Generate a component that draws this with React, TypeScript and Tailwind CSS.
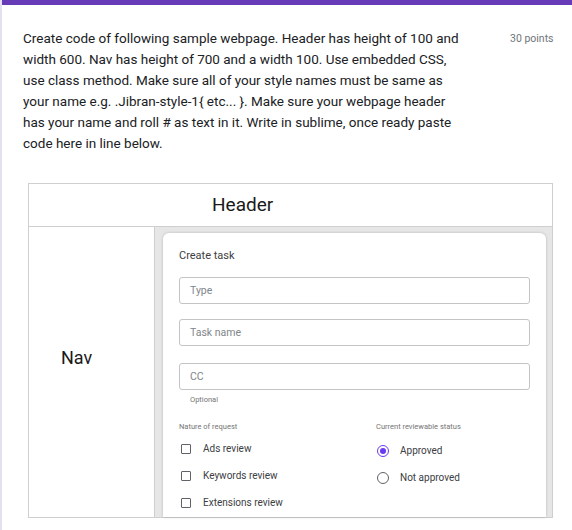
import React from 'react'

const lines = [
  'Create code of following sample webpage. Header has height of 100 and',
  'width 600. Nav has height of 700 and a width 100. Use embedded CSS,',
  'use class method. Make sure all of your style names must be same as',
  'your name e.g. .Jibran-style-1{ etc... }. Make sure your webpage header',
  'has your name and roll # as text in it. Write in sublime, once ready paste',
  'code here in line below.',
]

const Input = ({ label }: { label: string }) => (
  <div className="h-[27px] w-full rounded-[3px] border border-[#c4c4c4] flex items-center pl-[10px] text-[10.5px] text-[#80868b]">
    {label}
  </div>
)

const Check = ({ label }: { label: string }) => (
  <div className="flex items-center h-[27px]">
    <span className="ml-[2px] h-[10px] w-[10px] border-[1.5px] border-[#5f6368] rounded-[1px]" />
    <span className="ml-[12px] text-[10px] text-[#3c4043]">{label}</span>
  </div>
)

const Radio = ({ label, on }: { label: string; on?: boolean }) => (
  <div className="flex items-center h-[27px]">
    <span
      className={
        on
          ? 'ml-[1px] h-[12px] w-[12px] rounded-full border-[1.5px] border-[#6a3bf0] flex items-center justify-center'
          : 'ml-[1px] h-[12px] w-[12px] rounded-full border-[1.5px] border-[#5f6368]'
      }
    >
      {on && <span className="h-[6px] w-[6px] rounded-full bg-[#6a3bf0]" />}
    </span>
    <span className="ml-[11px] text-[10px] text-[#3c4043]">{label}</span>
  </div>
)

export default function App() {
  return (
    <div className="w-[572px] h-[530px] overflow-hidden bg-white flex font-['Roboto',sans-serif]">
      {/* left rail */}
      <div className="w-[2px] shrink-0 bg-[#e4e0ef]" />

      <div className="flex-1 flex flex-col">
        <div className="h-[5px] bg-[#673ab7]" />

        {/* question */}
        <div className="flex pt-[23px] pl-[21px]">
          <div className="text-[13.5px] leading-[21px] text-[#202124] w-[487px] shrink-0">
            {lines.map((l) => (
              <div key={l} className="whitespace-nowrap">{l}</div>
            ))}
          </div>
          <div className="pt-[3px] text-[10.5px] text-[#70757a] whitespace-nowrap">30 points</div>
        </div>

        {/* image */}
        <div className="mt-[29px] ml-[26px] w-[525px] h-[335px] border border-[#cfcfcf] flex flex-col">
          <div className="h-[43px] shrink-0 border-b border-[#cfcfcf] flex items-center pl-[183px] text-[19px] text-[#1a1a1a]">
            Header
          </div>
          <div className="flex-1 flex min-h-0">
            <div className="w-[126px] shrink-0 border-r border-[#cfcfcf] flex items-center pl-[32px] pb-[30px] text-[18px] text-[#1a1a1a]">
              Nav
            </div>
            <div className="flex-1 bg-[#e6e6e6] pl-[8px] pr-[6px] pt-[6px] flex min-h-0">
              <div className="flex-1 bg-white rounded-t-[6px] shadow-[0_0_3px_rgba(0,0,0,0.2)] px-[16px] pt-[17px] overflow-hidden">
                <div className="text-[11px] text-[#3c4043] leading-[12px]">Create task</div>
                <div className="mt-[15px]">
                  <Input label="Type" />
                </div>
                <div className="mt-[15px]">
                  <Input label="Task name" />
                </div>
                <div className="mt-[17px]">
                  <Input label="CC" />
                </div>
                <div className="mt-[4px] pl-[11px] text-[7.5px] text-[#757575]">Optional</div>
                <div className="mt-[17px] flex">
                  <div className="w-[197px]">
                    <div className="text-[7.5px] text-[#757575] leading-[10px]">Nature of request</div>
                    <div className="mt-[3px]">
                      <Check label="Ads review" />
                      <Check label="Keywords review" />
                      <Check label="Extensions review" />
                    </div>
                  </div>
                  <div>
                    <div className="text-[7.5px] text-[#757575] leading-[10px]">Current reviewable status</div>
                    <div className="mt-[5px]">
                      <Radio label="Approved" on />
                      <Radio label="Not approved" />
                    </div>
                  </div>
                </div>
              </div>
            </div>
          </div>
        </div>
      </div>
    </div>
  )
}
